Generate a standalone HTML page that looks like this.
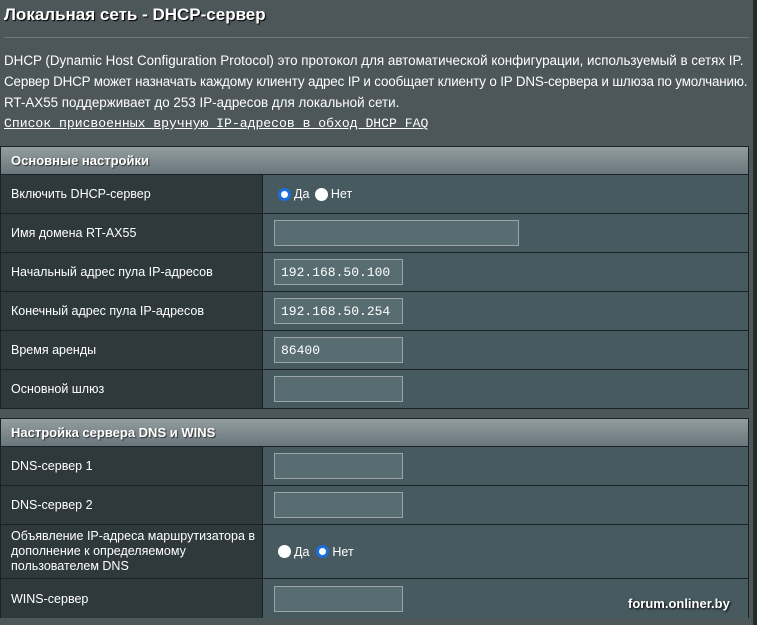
<!DOCTYPE html>
<html><head><meta charset="utf-8"><style>
*{margin:0;padding:0;box-sizing:border-box}
body{width:757px;height:625px;background:#4d5659;font-family:"Liberation Sans",Arial,sans-serif;color:#fff;position:relative;overflow:hidden}
.rs{position:absolute;left:753px;top:0;width:4px;height:625px;background:#262b2d}
.t{position:absolute;left:4px;top:5px;font-size:17px;font-weight:bold;text-shadow:1px 1px 1px #000}
.hr{position:absolute;left:4px;top:37px;width:745px;height:1px;background:#6e787b}
.d{position:absolute;left:4px;font-size:13.4px;color:#fff;white-space:nowrap}
.lk{position:absolute;left:4px;top:116px;font-family:"Liberation Mono",monospace;font-size:13.1px;text-decoration:underline;white-space:nowrap}
.tb{position:absolute;left:0;width:749px;border:1px solid #1b2225;background:#1b2225}
.h{height:27px;background:linear-gradient(#939d9f,#68767b);font-weight:bold;font-size:13px;padding:6px 0 0 10px;text-shadow:1px 1px 1px #333}
.r{display:flex;margin-top:1px}
.l{width:261px;background:#2f393c;font-size:12.5px;padding-left:10px;display:flex;align-items:center}
.v{flex:1;margin-left:1px;background:#475a5f;display:flex;align-items:center;padding-left:11px;font-size:12.5px}
.in{height:26px;border:1px solid #9aa5a8;background:#586d72;font-family:"Liberation Mono",monospace;font-size:13px;padding:5px 0 0 6px}
.rd{display:inline-block;width:13px;height:13px;border-radius:50%;background:#fff;vertical-align:-2px;margin-right:3px}
.on{border:3px solid #1a6ee0}
.wm{position:absolute;left:628px;top:596px;font-size:13px;font-weight:bold;text-shadow:1px 1px 2px #000}
</style></head><body>
<div class="rs"></div>
<div class="t">Локальная сеть - DHCP-сервер</div>
<div class="hr"></div>
<div class="d" style="top:53px">DHCP (Dynamic Host Configuration Protocol) это протокол для автоматической конфигурации, используемый в сетях IP.</div>
<div class="d" style="top:74px;letter-spacing:-0.15px">Сервер DHCP может назначать каждому клиенту адрес IP и сообщает клиенту о IP DNS-сервера и шлюза по умолчанию.</div>
<div class="d" style="top:95px">RT-AX55 поддерживает до 253 IP-адресов для локальной сети.</div>
<div class="lk">Список присвоенных вручную IP-адресов в обход DHCP FAQ</div>

<div class="tb" style="top:146px">
<div class="h">Основные настройки</div>
<div class="r" style="height:38px"><div class="l">Включить DHCP-сервер</div><div class="v" style="padding-left:15px"><span class="rd on"></span>Да&nbsp;<span class="rd" style="margin-left:2px"></span>Нет</div></div>
<div class="r" style="height:38px"><div class="l">Имя домена RT-AX55</div><div class="v"><div class="in" style="width:245px"></div></div></div>
<div class="r" style="height:38px"><div class="l">Начальный адрес пула IP-адресов</div><div class="v"><div class="in" style="width:129px">192.168.50.100</div></div></div>
<div class="r" style="height:38px"><div class="l">Конечный адрес пула IP-адресов</div><div class="v"><div class="in" style="width:129px">192.168.50.254</div></div></div>
<div class="r" style="height:38px"><div class="l">Время аренды</div><div class="v"><div class="in" style="width:129px">86400</div></div></div>
<div class="r" style="height:38px"><div class="l">Основной шлюз</div><div class="v"><div class="in" style="width:129px"></div></div></div>
</div>

<div class="tb" style="top:418px;border-bottom:none">
<div class="h">Настройка сервера DNS и WINS</div>
<div class="r" style="height:38px"><div class="l">DNS-сервер 1</div><div class="v"><div class="in" style="width:129px"></div></div></div>
<div class="r" style="height:38px"><div class="l">DNS-сервер 2</div><div class="v"><div class="in" style="width:129px"></div></div></div>
<div class="r" style="height:53px"><div class="l" style="line-height:15px">Объявление IP-адреса маршрутизатора в дополнение к определяемому пользователем DNS</div><div class="v" style="padding-left:15px"><span class="rd"></span>Да&nbsp;&nbsp;<span class="rd on"></span>Нет</div></div>
<div class="r" style="height:39px"><div class="l">WINS-сервер</div><div class="v"><div class="in" style="width:129px"></div></div></div>
</div>
<div class="wm">forum.onliner.by</div>
</body></html>
